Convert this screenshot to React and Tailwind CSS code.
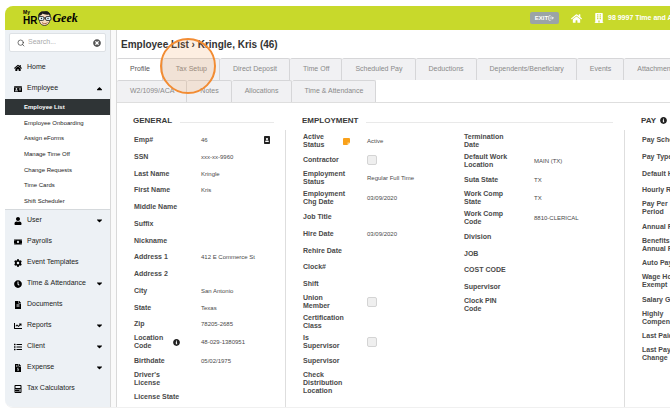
import React, { useState } from 'react';
import {
    FaHome,
    FaIdCard,
    FaUser,
    FaMoneyBill,
    FaCog,
    FaClock,
    FaFileAlt,
    FaChartLine,
    FaList,
    FaFileInvoiceDollar,
    FaCalculator,
    FaCaretDown,
    FaCaretUp,
    FaTimesCircle,
    FaInfoCircle,
    FaPortrait,
    FaBuilding
} from 'react-icons/fa';
import { Search, LogOut } from 'lucide-react';

const subItems = [
    'Employee List',
    'Employee Onboarding',
    'Assign eForms',
    'Manage Time Off',
    'Change Requests',
    'Time Cards',
    'Shift Scheduler'
];

const navItems = [
    { label: 'User', icon: FaUser, menu: true },
    { label: 'Payrolls', icon: FaMoneyBill },
    { label: 'Event Templates', icon: FaCog },
    { label: 'Time & Attendance', icon: FaClock, menu: true },
    { label: 'Documents', icon: FaFileAlt },
    { label: 'Reports', icon: FaChartLine, menu: true },
    { label: 'Client', icon: FaList, menu: true },
    { label: 'Expense', icon: FaFileInvoiceDollar, menu: true },
    { label: 'Tax Calculators', icon: FaCalculator }
];

const tabRows = [
    ['Profile', 'Tax Setup', 'Direct Deposit', 'Time Off', 'Scheduled Pay', 'Deductions', 'Dependents/Beneficiary', 'Events', 'Attachments'],
    ['W2/1099/ACA', 'Notes', 'Allocations', 'Time & Attendance']
];

const general = [
    { label: 'Emp#', value: '46', badge: true },
    { label: 'SSN', value: 'xxx-xx-9960' },
    { label: 'Last Name', value: 'Kringle' },
    { label: 'First Name', value: 'Kris' },
    { label: 'Middle Name' },
    { label: 'Suffix' },
    { label: 'Nickname' },
    { label: 'Address 1', value: '412 E Commerce St' },
    { label: 'Address 2' },
    { label: 'City', value: 'San Antonio' },
    { label: 'State', value: 'Texas' },
    { label: 'Zip', value: '78205-2685' },
    { label: 'Location\nCode', value: '48-029-1380951', info: true },
    { label: 'Birthdate', value: '05/02/1975' },
    { label: "Driver's\nLicense" },
    { label: 'License State' }
];

const employment = [
    { label: 'Active\nStatus', value: 'Active', note: true },
    { label: 'Contractor', check: true },
    { label: 'Employment\nStatus', value: 'Regular Full Time' },
    { label: 'Employment\nChg Date', value: '03/09/2020' },
    { label: 'Job Title' },
    { label: 'Hire Date', value: '03/09/2020' },
    { label: 'Rehire Date' },
    { label: 'Clock#' },
    { label: 'Shift' },
    { label: 'Union\nMember', check: true },
    { label: 'Certification\nClass' },
    { label: 'Is\nSupervisor', check: true },
    { label: 'Supervisor' },
    { label: 'Check\nDistribution\nLocation' }
];

const work = [
    { label: 'Termination\nDate' },
    { label: 'Default Work\nLocation', value: 'MAIN (TX)' },
    { label: 'Suta State', value: 'TX' },
    { label: 'Work Comp\nState', value: 'TX' },
    { label: 'Work Comp\nCode', value: '8810-CLERICAL' },
    { label: 'Division' },
    { label: 'JOB' },
    { label: 'COST CODE' },
    { label: 'Supervisor' },
    { label: 'Clock PIN\nCode' }
];

const pay = [
    { label: 'Pay Schedule' },
    { label: 'Pay Type' },
    { label: 'Default Hours' },
    { label: 'Hourly Rate' },
    { label: 'Pay Per\nPeriod' },
    { label: 'Annual Pay' },
    { label: 'Benefits\nAnnual Pay' },
    { label: 'Auto Pay' },
    { label: 'Wage Hour\nExempt' },
    { label: 'Salary Grade' },
    { label: 'Highly\nCompensated' },
    { label: 'Last Paid' },
    { label: 'Last Pay\nChange' }
];

const Logo = () => (
    <div className="flex items-center text-black">
        <div className="flex flex-col">
            <span className="text-[5px] leading-[6px] font-bold">My</span>
            <span className="text-[10px] leading-[12px] font-bold">HR</span>
        </div>
        <svg width="15" height="15" viewBox="0 0 30 30">
            <path d="M4 12C3 4 9 0 15 2c7-2 12 3 11 10l-1 9c-1 5-6 8-10 8s-9-3-10-8z" fill="#f6dcc0" stroke="#1c1c1c" strokeWidth="1.5" />
            <path d="M3 12C1 5 7 0 14 1c7-2 14 2 13 11l-3-5c-5 1-10 0-13-2-1 3-4 4-6 4z" fill="#1c1c1c" />
            <rect x="3" y="11" width="11" height="8" rx="3" fill="#d9eef5" stroke="#1c1c1c" strokeWidth="1.6" />
            <rect x="17" y="11" width="11" height="8" rx="3" fill="#d9eef5" stroke="#1c1c1c" strokeWidth="1.6" />
            <path d="M14 14h3" stroke="#1c1c1c" strokeWidth="2" />
            <circle cx="9" cy="15" r="1.4" fill="#1c1c1c" />
            <circle cx="22" cy="15" r="1.4" fill="#1c1c1c" />
            <path d="M10 23c3 3 8 3 11 0" fill="none" stroke="#9c4a2c" strokeWidth="1.6" />
        </svg>
        <span className="font-['Liberation_Serif',serif] text-[12px] leading-[14px] font-bold italic">Geek</span>
    </div>
);

const NavItem = ({ label, icon: Icon, menu, open }) => (
    <li>
        <a href="#" className="flex h-[21px] items-center pr-[6px] pl-[9px] text-[7px] text-[#222]">
            <Icon size={8} className="shrink-0 text-black" />
            <span className="flex-1 pl-[5px]">{label}</span>
            {menu && (open ? <FaCaretUp size={9} className="text-black" /> : <FaCaretDown size={9} className="text-black" />)}
        </a>
    </li>
);

const Field = ({ field, labelWidth }) => {
    const { label, value, badge, info, note, check } = field;

    return (
        <div className="flex min-h-[17px] items-center py-0.5 nth-[4n]:min-h-4">
            <label className={`flex shrink-0 items-center text-[7px] leading-[8px] font-bold text-[#4a4a4a] ${labelWidth}`}>
                <span className="flex-1 whitespace-pre">{label}</span>
                {info && <FaInfoCircle size={7} className="mr-[21px] text-[#222]" />}
                {note && (
                    <svg width="7" height="7" viewBox="0 0 14 14" className="mr-[17px]">
                        <path d="M1 0h12l1 1v8l-5 5H1l-1-1V1z" fill="#f9a11b" />
                        <path d="M9 14V9h5z" fill="#fbd58f" />
                    </svg>
                )}
                {check && (
                    <input
                        type="checkbox"
                        className="-mr-[10px] h-[10px] w-[10px] appearance-none rounded-xs border border-[#d4d4d4] bg-[#efefef] checked:bg-gray-500"
                    />
                )}
            </label>
            {value && <span className="flex-1 text-[6px] leading-[8px] whitespace-nowrap text-[#4a4a4a]">{value}</span>}
            {badge && <FaPortrait size={8} className="mr-[14px] text-[#222]" />}
        </div>
    );
};

const Fields = ({ items, labelWidth }) => (
    <div className="pl-px">
        {items.map((field) => (
            <Field key={field.label} field={field} labelWidth={labelWidth} />
        ))}
    </div>
);

const Section = ({ title, info, children }) => (
    <section className="flex h-full flex-col">
        <div className="flex h-[17px] items-center pr-3 pl-4">
            <h2 className="text-[8px] leading-[10px] font-bold text-[#3a3a3a]">{title}</h2>
            {info ? (
                <FaInfoCircle size={7} className="ml-1 shrink-0 text-[#222]" />
            ) : (
                <div className="mt-1 ml-2 h-px flex-1 bg-[#e9e9e9]" />
            )}
        </div>
        {children}
    </section>
);

const App = () => {
    const [activeTab, setActiveTab] = useState('Profile');
    const [query, setQuery] = useState('');

    return (
        <div className="flex min-h-screen flex-col overflow-hidden bg-white pt-[6px] pb-[9px] pl-[5px] font-['Liberation_Sans',Arial,sans-serif]">
            <div className="relative flex flex-1 flex-col overflow-hidden rounded-l-lg border-b border-[#f0f0f0]">
                <header className="flex h-6 items-center bg-[#c8d92b] pl-[18px]">
                    <Logo />
                    <div className="ml-auto flex w-[140px] items-center overflow-hidden whitespace-nowrap text-white">
                        <button className="flex h-3 w-[29px] shrink-0 items-center justify-center rounded-xs bg-[#9ba4a6] text-[6px] font-bold">
                            EXIT
                            <LogOut size={6} strokeWidth={3} />
                        </button>
                        <a href="#" aria-label="Home" className="ml-3 shrink-0">
                            <FaHome size={11} />
                        </a>
                        <FaBuilding size={10} className="ml-3 shrink-0" />
                        <span className="pl-1 text-[7px] leading-[8px] font-bold">98 9997 Time and Attendance</span>
                    </div>
                </header>

                <div className="flex flex-1">
                    <aside className="w-[105px] shrink-0 bg-[#edf1f5] pt-[3px]">
                        <div className="mx-1 mb-[5px] flex h-[19px] items-center rounded-xs border border-[#dde1e5] bg-white pr-1 pl-[7px]">
                            <Search size={8} strokeWidth={2} className="shrink-0 text-[#333]" />
                            <input
                                type="text"
                                aria-label="Search"
                                placeholder="Search..."
                                value={query}
                                onChange={(e) => setQuery(e.target.value)}
                                className="w-full min-w-0 pl-[3px] text-[7px] text-[#333] outline-none placeholder:text-[#aaa]"
                            />
                            <button aria-label="Clear search" onClick={() => setQuery('')}>
                                <FaTimesCircle size={8} className="text-[#555]" />
                            </button>
                        </div>
                        <nav>
                            <ul>
                                <NavItem label="Home" icon={FaHome} />
                                <NavItem label="Employee" icon={FaIdCard} menu open />
                            </ul>
                            <ul className="border-b border-[#d5d9dc] bg-white">
                                {subItems.map((item, i) => (
                                    <li key={item} className="h-4 nth-[3n]:h-[15px]">
                                        <a
                                            href="#"
                                            className={`flex h-full items-center pl-[19px] text-[6px] ${i === 0 ? 'bg-[#2f3436] font-bold text-white' : 'text-[#222]'}`}
                                        >
                                            {item}
                                        </a>
                                    </li>
                                ))}
                            </ul>
                            <ul>
                                {navItems.map((item) => (
                                    <NavItem key={item.label} {...item} />
                                ))}
                            </ul>
                        </nav>
                    </aside>

                    <div className="w-[7px] shrink-0 border-x border-[#d9d9d9] bg-[#fafafa]" />

                    <main className="flex min-w-0 flex-1 flex-col overflow-hidden">
                        <h1 className="flex h-7 items-center pl-1 text-[10px] font-bold whitespace-pre text-[#333]">
                            Employee List › Kringle, Kris (46)
                        </h1>
                        <div role="tablist" className="border-b border-[#dedede]">
                            {tabRows.map((row) => (
                                <div key={row[0]} className="flex">
                                    {row.map((tab) => (
                                        <button
                                            key={tab}
                                            role="tab"
                                            aria-selected={tab === activeTab}
                                            onClick={() => setActiveTab(tab)}
                                            className={`h-[22px] shrink-0 rounded-t-xs border-t border-r border-[#d6d6d8] pr-3 pl-[13px] text-[7px] whitespace-nowrap ${tab === activeTab ? 'bg-white text-[#555]' : 'bg-[#f1f1f3] text-[#8a8a8a]'}`}
                                        >
                                            {tab}
                                        </button>
                                    ))}
                                </div>
                            ))}
                        </div>

                        <div className="flex flex-1 pt-[9px]">
                            <div className="w-[169px] shrink-0">
                                <Section title="GENERAL">
                                    <div className="mt-px flex-1 border-r border-[#dedede] pt-px pl-4">
                                        <Fields items={general} labelWidth="w-[67px]" />
                                    </div>
                                </Section>
                            </div>
                            <div className="w-[339px] shrink-0">
                                <Section title="EMPLOYMENT">
                                    <div className="mt-px flex flex-1 border-r border-[#dedede] pt-px pl-4">
                                        <div className="w-[161px]">
                                            <Fields items={employment} labelWidth="w-[64px]" />
                                        </div>
                                        <Fields items={work} labelWidth="w-[70px]" />
                                    </div>
                                </Section>
                            </div>
                            <div className="min-w-0 flex-1">
                                <Section title="PAY" info>
                                    <div className="mt-px pt-px pl-4">
                                        <Fields items={pay} labelWidth="w-[67px]" />
                                    </div>
                                </Section>
                            </div>
                        </div>
                    </main>
                </div>

                {/* click marker over the Tax Setup tab */}
                <div className="pointer-events-none absolute top-8 left-[155px] h-14 w-14 rounded-full border-2 border-[#f28c33] bg-[#f28c33]/15" />
            </div>
        </div>
    );
};

export default App;
